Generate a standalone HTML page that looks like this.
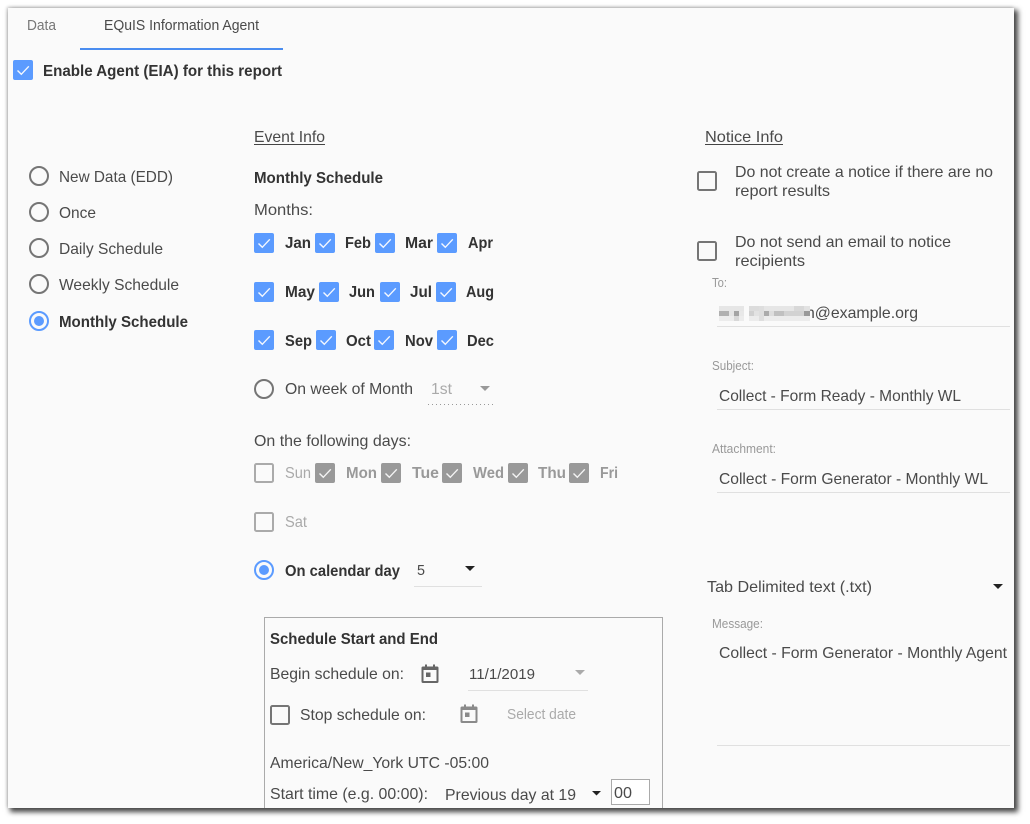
<!DOCTYPE html>
<html><head><meta charset="utf-8"><style>
html,body{margin:0;padding:0;background:#fff;width:1030px;height:824px;overflow:hidden}
#p{position:absolute;left:8px;top:8px;width:1006px;height:800px;background:#fafafa;box-shadow:3px 3px 5px 1px #444,-1px -1px 3px #ccc}
svg{position:absolute;left:0;top:0}
text{font-family:"Liberation Sans",sans-serif;font-size:16px;fill:#4a4a4a}
.b{font-weight:bold;fill:#333}
.s{font-size:12.5px;fill:#999}
.m{font-size:14.5px}
.g{fill:#aaa}
.gb{font-weight:bold;fill:#999}
.l{fill:#e0e0e0}
</style></head><body><div id="p"></div>
<svg width="1030" height="824" viewBox="0 0 1030 824">
<defs>
<g id="c"><rect width="20" height="20" rx="2" fill="#5b9bff"/><path d="M4.500 10.500l3.800 3.800 7.500-8" fill="none" stroke="#f4f8ff" stroke-width="1.400"/></g>
<g id="d"><rect width="20" height="20" rx="2" fill="#999"/><path d="M4.500 10.500l3.800 3.800 7.500-8" fill="none" stroke="#f4f4f4" stroke-width="1.400"/></g>
<g id="u"><rect x="1" y="1" width="18" height="18" rx="1.500" fill="none" stroke="#757575" stroke-width="2"/></g>
<g id="ug"><rect x="1" y="1" width="18" height="18" rx="1.500" fill="none" stroke="#aaa" stroke-width="2"/></g>
<g id="r"><circle cx="0" cy="0" r="9" fill="none" stroke="#757575" stroke-width="2"/></g>
<g id="ro"><circle cx="0" cy="0" r="9" fill="none" stroke="#5b9bff" stroke-width="2"/><circle cx="0" cy="0" r="5" fill="#5b9bff"/></g>
<path id="cal" d="M3 2.500H5V0.500H7V2.500H13V0.500H15V2.500H17Q18.500 2.500 18.500 4V17.500Q18.500 19 17 19H3Q1.500 19 1.500 17.500V4Q1.500 2.500 3 2.500ZM3.500 6V17H16.500V6ZM6 8.500H10.500V13H6Z" fill-rule="evenodd"/>
</defs>

<text x="27" y="30" class="m" style="fill:#777" textLength="29" lengthAdjust="spacingAndGlyphs">Data</text>
<text x="104" y="30" class="m" textLength="155" lengthAdjust="spacingAndGlyphs">EQuIS Information Agent</text>
<rect x="80" y="48" width="203" height="2" fill="#4a8df0"/>
<use href="#c" x="13" y="60"/>
<text x="43" y="76" class="b" textLength="239" lengthAdjust="spacingAndGlyphs">Enable Agent (EIA) for this report</text>

<use href="#r" x="39" y="176"/><text x="59" y="182" textLength="114" lengthAdjust="spacingAndGlyphs">New Data (EDD)</text>
<use href="#r" x="39" y="212"/><text x="59" y="218" textLength="37" lengthAdjust="spacingAndGlyphs">Once</text>
<use href="#r" x="39" y="248"/><text x="59" y="254" textLength="104" lengthAdjust="spacingAndGlyphs">Daily Schedule</text>
<use href="#r" x="39" y="284"/><text x="59" y="290" textLength="120" lengthAdjust="spacingAndGlyphs">Weekly Schedule</text>
<use href="#ro" x="39" y="321"/><text x="59" y="327" class="b" textLength="129" lengthAdjust="spacingAndGlyphs">Monthly Schedule</text>

<text x="254" y="142" textLength="71" lengthAdjust="spacingAndGlyphs">Event Info</text><rect x="254" y="144" width="71" height="1" fill="#444"/>
<text x="254" y="183" class="b" textLength="129" lengthAdjust="spacingAndGlyphs">Monthly Schedule</text>
<text x="254" y="215" textLength="59" lengthAdjust="spacingAndGlyphs">Months:</text>

<use href="#c" x="254" y="233"/><text x="285" y="248" class="b" textLength="26" lengthAdjust="spacingAndGlyphs">Jan</text>
<use href="#c" x="315" y="233"/><text x="345" y="248" class="b" textLength="26" lengthAdjust="spacingAndGlyphs">Feb</text>
<use href="#c" x="375" y="233"/><text x="405" y="248" class="b" textLength="28" lengthAdjust="spacingAndGlyphs">Mar</text>
<use href="#c" x="437" y="233"/><text x="468" y="248" class="b" textLength="25" lengthAdjust="spacingAndGlyphs">Apr</text>

<use href="#c" x="254" y="282"/><text x="285" y="297" class="b" textLength="30" lengthAdjust="spacingAndGlyphs">May</text>
<use href="#c" x="319" y="282"/><text x="349" y="297" class="b" textLength="26" lengthAdjust="spacingAndGlyphs">Jun</text>
<use href="#c" x="380" y="282"/><text x="410" y="297" class="b" textLength="22" lengthAdjust="spacingAndGlyphs">Jul</text>
<use href="#c" x="436" y="282"/><text x="466" y="297" class="b" textLength="28" lengthAdjust="spacingAndGlyphs">Aug</text>

<use href="#c" x="254" y="330"/><text x="285" y="346" class="b" textLength="27" lengthAdjust="spacingAndGlyphs">Sep</text>
<use href="#c" x="316" y="330"/><text x="346" y="346" class="b" textLength="25" lengthAdjust="spacingAndGlyphs">Oct</text>
<use href="#c" x="374" y="330"/><text x="405" y="346" class="b" textLength="28" lengthAdjust="spacingAndGlyphs">Nov</text>
<use href="#c" x="437" y="330"/><text x="467" y="346" class="b" textLength="27" lengthAdjust="spacingAndGlyphs">Dec</text>

<use href="#r" x="264" y="389"/><text x="285" y="394" textLength="128" lengthAdjust="spacingAndGlyphs">On week of Month</text>
<text x="431" y="394" class="g" textLength="21" lengthAdjust="spacingAndGlyphs">1st</text>
<path d="M480 386h10l-5 5z" fill="#999"/>
<path d="M428 404.500H494" stroke="#999" stroke-dasharray="1 3" fill="none"/>

<text x="254" y="446" textLength="157" lengthAdjust="spacingAndGlyphs">On the following days:</text>
<use href="#ug" x="254" y="463"/><text x="285" y="478" class="g" textLength="26" lengthAdjust="spacingAndGlyphs">Sun</text>
<use href="#d" x="315" y="463"/><text x="346" y="478" class="gb" textLength="31" lengthAdjust="spacingAndGlyphs">Mon</text>
<use href="#d" x="381" y="463"/><text x="412" y="478" class="gb" textLength="27" lengthAdjust="spacingAndGlyphs">Tue</text>
<use href="#d" x="442" y="463"/><text x="473" y="478" class="gb" textLength="31" lengthAdjust="spacingAndGlyphs">Wed</text>
<use href="#d" x="508" y="463"/><text x="538" y="478" class="gb" textLength="28" lengthAdjust="spacingAndGlyphs">Thu</text>
<use href="#d" x="569" y="463"/><text x="600" y="478" class="gb" textLength="18" lengthAdjust="spacingAndGlyphs">Fri</text>
<use href="#ug" x="254" y="512"/><text x="285" y="527" class="g" textLength="22" lengthAdjust="spacingAndGlyphs">Sat</text>

<use href="#ro" x="264" y="570"/><text x="285" y="576" class="b" textLength="115" lengthAdjust="spacingAndGlyphs">On calendar day</text>
<text x="417" y="575" class="m" textLength="8" lengthAdjust="spacingAndGlyphs">5</text>
<path d="M465 566h10l-5 5z" fill="#222"/>
<rect x="414" y="586" width="68" height="1" class="l"/>

<path d="M264.500 808V617.500H662.500V808" fill="none" stroke="#aaa"/>
<text x="270" y="644" class="b" textLength="168" lengthAdjust="spacingAndGlyphs">Schedule Start and End</text>
<text x="270" y="679" textLength="134" lengthAdjust="spacingAndGlyphs">Begin schedule on:</text>
<use href="#cal" x="420" y="664" fill="#666"/>
<text x="469" y="679" class="m" textLength="66" lengthAdjust="spacingAndGlyphs">11/1/2019</text>
<path d="M575 670h10l-5 5z" fill="#aaa"/>
<rect x="468" y="690" width="120" height="1" class="l"/>
<use href="#u" x="270" y="705"/>
<text x="300" y="720" textLength="126" lengthAdjust="spacingAndGlyphs">Stop schedule on:</text>
<use href="#cal" x="459" y="704" fill="#8a8a8a"/>
<text x="507" y="719" class="m g" textLength="69" lengthAdjust="spacingAndGlyphs">Select date</text>
<text x="270" y="768" textLength="219" lengthAdjust="spacingAndGlyphs">America/New_York UTC -05:00</text>
<text x="270" y="799" textLength="158" lengthAdjust="spacingAndGlyphs">Start time (e.g. 00:00):</text>
<text x="445" y="800" textLength="131" lengthAdjust="spacingAndGlyphs">Previous day at 19</text>
<path d="M592 791h9l-4.500 4.500z" fill="#222"/>
<rect x="611.500" y="779.500" width="38" height="25" fill="#fff" stroke="#aaa"/>
<text x="614" y="798" textLength="18" lengthAdjust="spacingAndGlyphs">00</text>

<text x="705" y="142" textLength="78" lengthAdjust="spacingAndGlyphs">Notice Info</text><rect x="705" y="144" width="78" height="1" fill="#444"/>
<use href="#u" x="697" y="171"/>
<text x="735" y="177" textLength="258" lengthAdjust="spacingAndGlyphs">Do not create a notice if there are no</text>
<text x="735" y="196" textLength="95" lengthAdjust="spacingAndGlyphs">report results</text>
<use href="#u" x="697" y="241"/>
<text x="735" y="247" textLength="216" lengthAdjust="spacingAndGlyphs">Do not send an email to notice</text>
<text x="735" y="266" textLength="70" lengthAdjust="spacingAndGlyphs">recipients</text>

<text x="712" y="287" class="s" textLength="15" lengthAdjust="spacingAndGlyphs">To:</text>
<text x="806" y="318" textLength="112" lengthAdjust="spacingAndGlyphs">n@example.org</text>
<g>
<rect x="719" y="306" width="91" height="5" fill="#e6e6e6"/>
<rect x="719" y="311" width="91" height="5" fill="#d2d2d2"/>
<rect x="719" y="316" width="91" height="5" fill="#ececec"/>
<rect x="719" y="311" width="10" height="5" fill="#b0b0b0"/>
<rect x="729" y="311" width="5" height="5" fill="#e4e4e4"/>
<rect x="734" y="311" width="5" height="5" fill="#a4a4a4"/>
<rect x="734" y="316" width="5" height="5" fill="#d8d8d8"/>
<rect x="739" y="311" width="5" height="5" fill="#e8e8e8"/>
<rect x="744" y="306" width="5" height="15" fill="#fafafa"/>
<rect x="749" y="306" width="10" height="5" fill="#dcdcdc"/>
<rect x="749" y="311" width="5" height="5" fill="#d0d0d0"/>
<rect x="754" y="311" width="5" height="5" fill="#e2e2e2"/>
<rect x="759" y="306" width="5" height="15" fill="#dedede"/>
<rect x="764" y="311" width="5" height="5" fill="#ababab"/>
<rect x="769" y="311" width="5" height="5" fill="#dddddd"/>
<rect x="774" y="311" width="10" height="5" fill="#c0c0c0"/>
<rect x="794" y="306" width="10" height="5" fill="#d8d8d8"/>
<rect x="804" y="311" width="6" height="5" fill="#999"/>
<rect x="804" y="306" width="6" height="5" fill="#e2e2e2"/>
</g>
<rect x="717" y="326" width="293" height="1" class="l"/>
<text x="712" y="370" class="s" textLength="42" lengthAdjust="spacingAndGlyphs">Subject:</text>
<text x="719" y="401" textLength="242" lengthAdjust="spacingAndGlyphs">Collect - Form Ready - Monthly WL</text>
<rect x="717" y="409" width="293" height="1" class="l"/>
<text x="712" y="453" class="s" textLength="64" lengthAdjust="spacingAndGlyphs">Attachment:</text>
<text x="719" y="484" textLength="269" lengthAdjust="spacingAndGlyphs">Collect - Form Generator - Monthly WL</text>
<rect x="717" y="492" width="293" height="1" class="l"/>
<text x="707" y="592" textLength="165" lengthAdjust="spacingAndGlyphs">Tab Delimited text (.txt)</text>
<path d="M993 584h10l-5 5z" fill="#222"/>
<text x="712" y="628" class="s" textLength="51" lengthAdjust="spacingAndGlyphs">Message:</text>
<text x="719" y="658" textLength="288" lengthAdjust="spacingAndGlyphs">Collect - Form Generator - Monthly Agent</text>
<rect x="717" y="745" width="293" height="1" class="l"/>
</svg>
</body></html>
